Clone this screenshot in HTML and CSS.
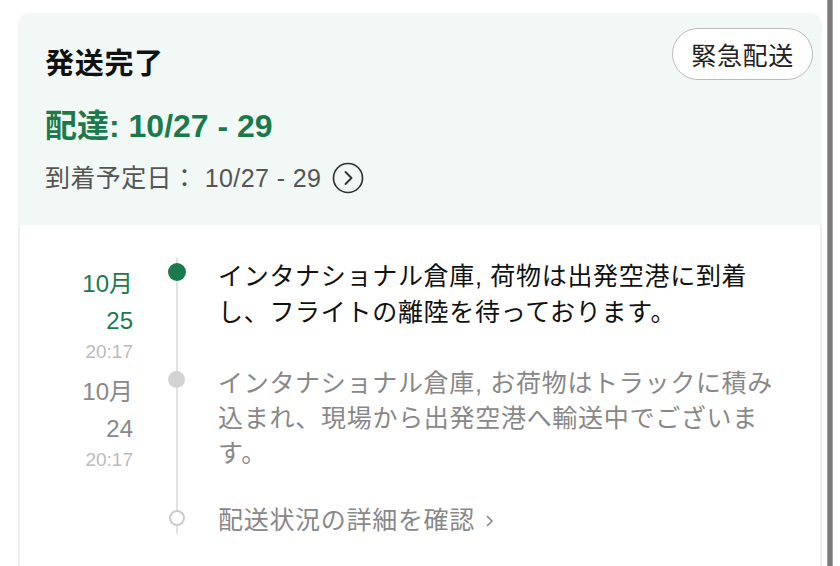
FILE: index.html
```html
<!DOCTYPE html>
<html lang="ja">
<head>
    <meta charset="UTF-8">
    <meta name="viewport" content="width=device-width, initial-scale=1.0">
    <title>配送状況</title>
    <link rel="stylesheet" href="styles.css">
</head>
<body>
    <div class="card">
        <header class="card-head">
            <div class="head-top">
                <h1 class="status">発送完了</h1>
                <button class="express">緊急配送</button>
            </div>
            <p class="delivery">配達: 10/27 - 29</p>
            <p class="eta">到着予定日： 10/27 - 29
                <svg class="eta-icon" width="32" height="32" viewBox="0 0 32 32">
                    <circle cx="16" cy="16" r="14.5" fill="none" stroke="#333" stroke-width="1.7"/>
                    <path d="M13.5 10 L19.5 16 L13.5 22" fill="none" stroke="#333" stroke-width="1.9" stroke-linecap="round" stroke-linejoin="round"/>
                </svg>
            </p>
        </header>

        <div class="card-body">
            <ol class="timeline">
                <li class="event current">
                    <div class="when">
                        <div class="day">10月<br>25</div>
                        <div class="time">20:17</div>
                    </div>
                    <div class="axis"><span class="dot"></span></div>
                    <p class="what">インタナショナル倉庫, 荷物は出発空港に到着し、フライトの離陸を待っております。</p>
                </li>
                <li class="event">
                    <div class="when">
                        <div class="day">10月<br>24</div>
                        <div class="time">20:17</div>
                    </div>
                    <div class="axis"><span class="dot"></span></div>
                    <p class="what">インタナショナル倉庫, お荷物はトラックに積み込まれ、現場から出発空港へ輸送中でございます。</p>
                </li>
                <li class="event more">
                    <div class="when"></div>
                    <div class="axis"><span class="dot"></span></div>
                    <a class="what" href="#">配送状況の詳細を確認
                        <svg class="chev" width="10" height="16" viewBox="0 0 10 16">
                            <path d="M2 3 L7 8 L2 13" fill="none" stroke="#888" stroke-width="1.6"/>
                        </svg>
                    </a>
                </li>
            </ol>
        </div>
    </div>
    <div class="scrollbar"></div>
</body>
</html>
```

FILE: styles.css
```css
* {
    box-sizing: border-box;
}
body {
    font-family: "Liberation Sans", "Noto Sans CJK JP", sans-serif;
    margin: 0;
    padding: 0 7px 0 18px;
    height: 100vh;
    overflow: hidden;
    display: flex;
    gap: 5px;
    background: white;
    color: #222;
}
.card {
    flex: 1;
    margin-top: 13px;
}
.card-head {
    background-color: #f2f8f5;
    border-radius: 12px 12px 0 0;
    padding: 15px 9px 29px 27px;
}
.head-top {
    display: flex;
    justify-content: space-between;
    align-items: flex-start;
}
.status {
    margin: 18px 0 0;
    font-size: 29px;
    line-height: 36px;
    letter-spacing: 0.7px;
    font-weight: bold;
    color: #111;
}
.express {
    height: 52px;
    padding: 0 18px;
    border: 1.5px solid #bbb;
    border-radius: 26px;
    background: white;
    font-family: inherit;
    font-size: 25px;
    letter-spacing: 0.7px;
    color: #222;
}
.delivery {
    margin: 24px 0 0;
    font-size: 32px;
    line-height: 40px;
    font-weight: bold;
    color: #1a7a4d;
}
.eta {
    margin: 14px 0 0;
    font-size: 25px;
    line-height: 36px;
    letter-spacing: 0.4px;
    color: #555;
    display: flex;
    align-items: center;
}
.eta-icon {
    margin-left: 11px;
}
.card-body {
    border-left: 2px solid #eee;
    border-right: 2px solid #eee;
    padding: 33px 40px 60px 0;
    min-height: 400px;
}
.timeline {
    list-style: none;
    margin: 0;
    padding: 0;
    position: relative;
}
.timeline::before {
    content: "";
    position: absolute;
    left: 156px;
    top: 0;
    bottom: 4px;
    width: 2px;
    background: #e2e2e2;
}
.event {
    display: grid;
    grid-template-columns: 115px 83px 1fr;
    margin-bottom: 1px;
}
.when {
    padding: 7px 2px 0 0;
    text-align: right;
}
.day {
    font-size: 24px;
    line-height: 37px;
    color: #888;
}
.time {
    font-size: 19px;
    line-height: 26px;
    color: #bbb;
}
.axis {
    display: flex;
    justify-content: center;
    align-items: flex-start;
}
.dot {
    position: relative;
    margin-top: 5px;
    width: 17px;
    height: 17px;
    border-radius: 50%;
    background: #d2d2d2;
}
.what {
    margin: 0;
    font-size: 25px;
    line-height: 35px;
    letter-spacing: 0.7px;
    color: #888;
}
.current .day {
    color: #1a7a4d;
}
.current .dot {
    width: 18px;
    height: 18px;
    background: #1a7a4d;
}
.current .what {
    line-height: 36px;
    color: #111;
}
.more {
    margin-top: 29px;
}
.more .dot {
    margin-top: 8px;
    width: 16px;
    height: 16px;
    background: white;
    border: 2px solid #ccc;
}
.more .what {
    text-decoration: none;
    line-height: 36px;
}
.chev {
    margin-left: 2px;
}
.scrollbar {
    width: 6px;
    background: #7b7b7b;
    border-left: 1px solid #a5a5a5;
    border-right: 1px solid #a5a5a5;
}
```
